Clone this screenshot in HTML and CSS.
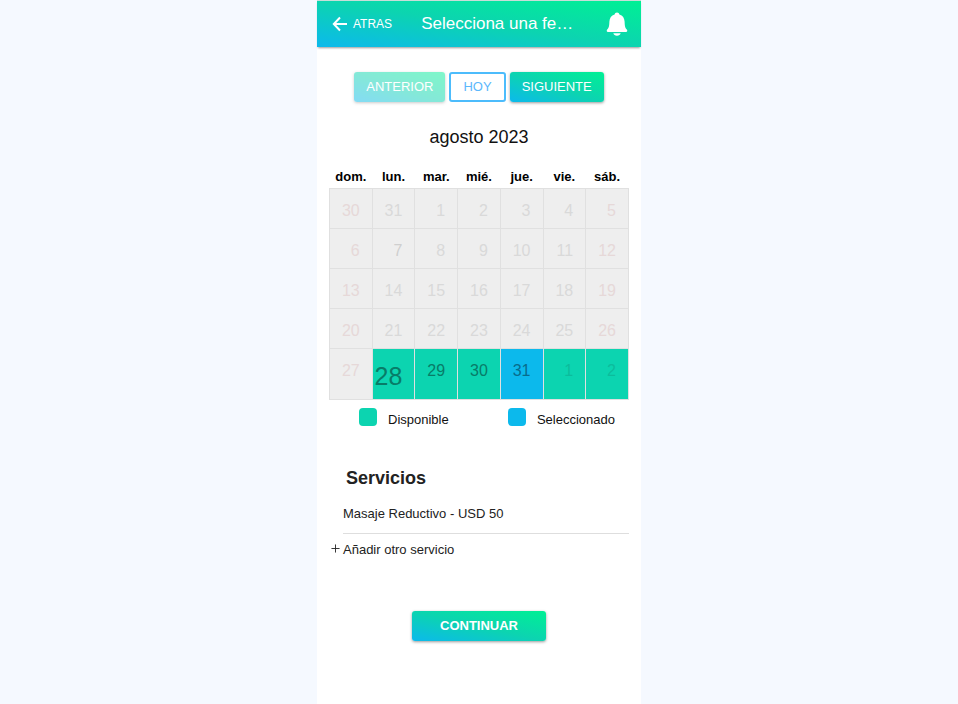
FILE: index.html
```html
<!DOCTYPE html>
<html lang="es">
<head>
<meta charset="utf-8">
<meta name="viewport" content="width=device-width, initial-scale=1">
<title>Selecciona una fecha</title>
<link rel="stylesheet" href="styles.css">
</head>
<body>
<div class="app">
  <header class="toolbar">
    <button class="back" type="button">
      <svg class="back-icon" viewBox="0 0 16 16" aria-hidden="true"><path d="M8 1.5 1.8 8 8 14.500M2 8h13" fill="none" stroke="currentColor" stroke-width="2"/></svg>
      ATRAS
    </button>
    <h1 class="title">Selecciona una fe…</h1>
    <button class="bell" type="button" aria-label="Notificaciones">
      <svg class="bell-icon" viewBox="0 0 22 24" aria-hidden="true"><path d="M11 0.500c-1.300 0-2.200.8-2.400 1.900C5.200 3.300 3.600 6 3.400 9.500 3.200 14 3 15.600 1.400 17.300.2 18.500.6 20 2 20h18c1.400 0 1.800-1.500.6-2.700C19 15.600 18.800 14 18.600 9.500 18.400 6 16.800 3.300 13.400 2.400 13.200 1.300 12.300.5 11 .5zM7.300 21.200h7.400c-.4 1.600-1.800 2.500-3.700 2.500s-3.300-.9-3.700-2.500z" fill="currentColor"/></svg>
    </button>
  </header>
  <main class="content">
    <nav class="pager" aria-label="Mes">
      <button class="btn" type="button" disabled>ANTERIOR</button>
      <button class="btn outline" type="button">HOY</button>
      <button class="btn" type="button">SIGUIENTE</button>
    </nav>
    <h2 class="month">agosto 2023</h2>
    <table class="calendar">
      <thead>
        <tr><th>dom.</th><th>lun.</th><th>mar.</th><th>mié.</th><th>jue.</th><th>vie.</th><th>sáb.</th></tr>
      </thead>
      <tbody>
        <tr><td class="weekend">30</td><td>31</td><td>1</td><td>2</td><td>3</td><td>4</td><td class="weekend">5</td></tr>
        <tr><td class="weekend">6</td><td class="dark">7</td><td>8</td><td>9</td><td>10</td><td>11</td><td class="weekend">12</td></tr>
        <tr><td class="weekend">13</td><td>14</td><td>15</td><td>16</td><td>17</td><td>18</td><td class="weekend">19</td></tr>
        <tr><td class="weekend">20</td><td>21</td><td>22</td><td>23</td><td>24</td><td>25</td><td class="weekend">26</td></tr>
        <tr class="last"><td class="weekend">27</td><td class="free today">28</td><td class="free">29</td><td class="free">30</td><td class="chosen">31</td><td class="free other">1</td><td class="free other">2</td></tr>
      </tbody>
    </table>
    <div class="legend">
      <span class="key"><span class="swatch"></span>Disponible</span>
      <span class="key"><span class="swatch blue"></span>Seleccionado</span>
    </div>
    <section class="services">
      <h2 class="heading">Servicios</h2>
      <p class="service">Masaje Reductivo - USD 50</p>
      <button class="add" type="button">
        <svg class="plus" viewBox="0 0 10 10" aria-hidden="true"><path d="M5 .5v9M.5 5h9" fill="none" stroke="currentColor"/></svg>
        Añadir otro servicio
      </button>
    </section>
    <button class="btn continue" type="button">CONTINUAR</button>
  </main>
</div>
</body>
</html>
```
FILE: styles.css
```css
:root {
  --blue: #0cb9ec;
  --green: #0cd4b0;
  --brand: linear-gradient(to top right, #0cb9ec, #0cd4b0, #00f094);
}

* { box-sizing: border-box; }

body {
  margin: 0;
  background: #f5f9ff;
  color: #222;
  font: 13px/18px "Liberation Sans", Arial, sans-serif;
}

button {
  margin: 0;
  padding: 0;
  border: 0;
  background: none;
  color: inherit;
  font: inherit;
}

h1, h2, p { margin: 0; }

.app {
  max-width: 324px;
  min-height: 100vh;
  margin: 0 auto;
  background: #fff;
}

.toolbar {
  display: flex;
  align-items: center;
  padding: 11px 13px 11px 15px;
  border-top: 1px solid #c8ddd8;
  background: var(--brand);
  box-shadow: 0 2px 2px -1px rgba(0, 0, 0, 0.4);
  color: #fff;
}

.back {
  display: flex;
  align-items: center;
  gap: 5px;
  margin-right: 29px;
  font-size: 12px;
}

.back-icon { width: 16px; height: 16px; }

.title {
  flex: 1;
  margin-right: 28px;
  font-size: 17px;
  font-weight: 400;
  line-height: 24px;
  white-space: nowrap;
}

.bell-icon { display: block; width: 22px; height: 24px; }

.content {
  display: flex;
  flex-direction: column;
  padding: 25px 12px 24px;
}

.pager {
  display: flex;
  justify-content: center;
  gap: 4px;
}

.btn {
  height: 30px;
  padding: 0 12px;
  border-radius: 3px;
  background: var(--brand);
  box-shadow: 0 1px 3px rgba(0, 0, 0, 0.4);
  color: #fff;
  font-size: 13px;
}

.btn:disabled { opacity: 0.5; }

.btn.outline {
  border: 2px solid #4cbcfc;
  background: #fff;
  box-shadow: none;
  color: #5cb8fc;
}

.month {
  margin: 23px 0 19px;
  color: #111;
  font-size: 18px;
  font-weight: 400;
  line-height: 24px;
  text-align: center;
}

.calendar {
  width: 100%;
  border-collapse: collapse;
  table-layout: fixed;
}

.calendar th {
  height: 20px;
  padding: 0 0 2px;
  color: #000;
  font-size: 13px;
  line-height: 16px;
}

.calendar td {
  height: 40px;
  padding: 13px 12px 8px 0;
  border: 1px solid #e0e0e0;
  background: #eee;
  color: #d9d9d9;
  font-size: 16px;
  line-height: 18px;
  text-align: right;
  vertical-align: top;
}

.calendar .weekend { color: #e6d8d8; }
.calendar .dark { color: #cfcfcf; }
.calendar .last td { height: 51px; }
.calendar .free { background: var(--green); color: #087c68; }
.calendar .chosen { background: var(--blue); color: #086c8c; }
.calendar .other { color: #0cbc9c; }

.calendar .last .today {
  padding-bottom: 6px;
  font-size: 25px;
  line-height: 28px;
}

.legend {
  display: flex;
  justify-content: space-between;
  padding: 8px 14px 0 30px;
  color: #111;
}

.key {
  display: flex;
  gap: 11px;
  line-height: 24px;
}

.swatch {
  width: 18px;
  height: 18px;
  border-radius: 4px;
  background: var(--green);
}

.swatch.blue { background: var(--blue); }

.heading {
  margin: 34px 0 0 17px;
  font-size: 18px;
  line-height: 24px;
}

.service {
  margin-left: 14px;
  padding: 15px 0 10px;
  border-bottom: 1px solid #dedede;
}

.add {
  display: flex;
  gap: 3px;
  margin: 7px 0 0 2px;
}

.plus {
  width: 9px;
  height: 9px;
  margin-top: 3px;
}

.continue {
  align-self: center;
  margin-top: 52px;
  padding: 0 28px;
  font-weight: 700;
}
```
